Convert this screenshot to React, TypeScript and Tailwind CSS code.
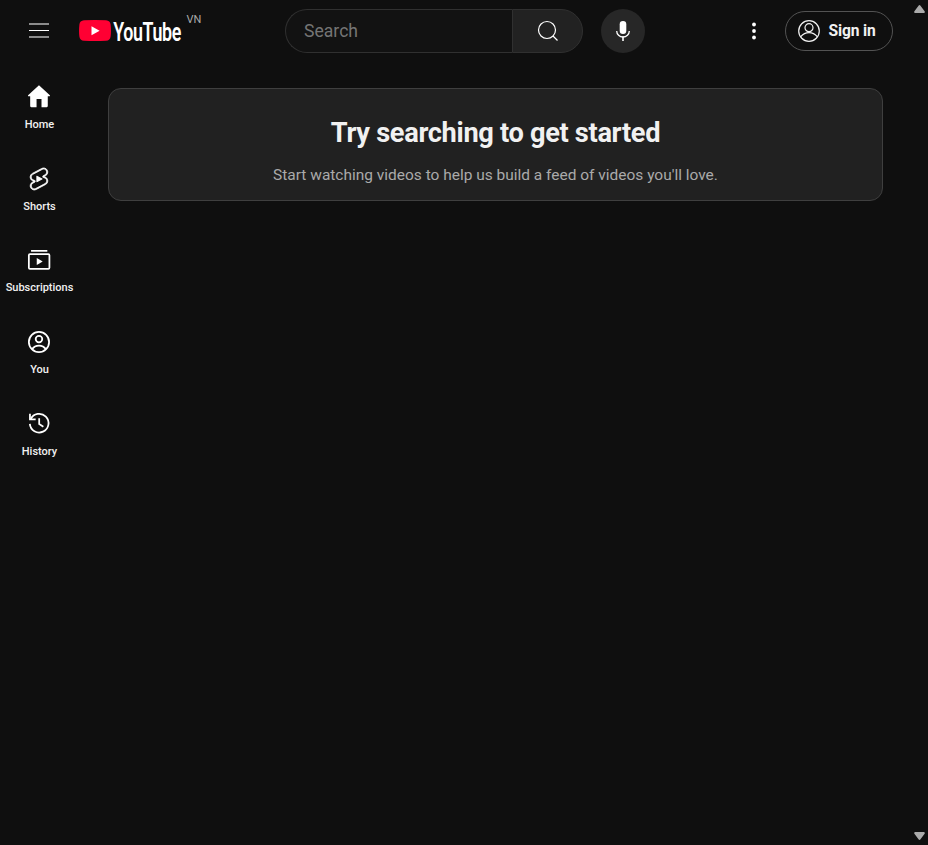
import React from "react";

type IconProps = { children: React.ReactNode };

function GuideIcon({ children }: IconProps) {
  return (
    <svg viewBox="0 0 24 24" className="size-[26.4px]" fill="none" stroke="#fff" strokeWidth="1.6">
      {children}
    </svg>
  );
}

const guideItems = [
  {
    label: "Home",
    icon: (
      <path
        d="M11.800 1.100 21.700 10.300c.3.3.1.9-.4.9H19.800v8.900c0 .6-.4 1-1 1h-4.700v-7.500H9.600v7.500H4.800c-.6 0-1-.4-1-1v-8.900H2.300c-.5 0-.7-.6-.4-.9Z"
        fill="#fff"
        stroke="none"
      />
    ),
  },
  {
    label: "Shorts",
    icon: (
      <path
        transform="translate(-.2 .7)"
        d="M10 14.65v-5.3L15 12l-5 2.65zm7.77-4.33c-.77-.32-1.2-.5-1.2-.5L18 9.06c1.84-.96 2.53-3.23 1.56-5.06s-3.24-2.53-5.07-1.56L6 6.94c-1.29.68-2.07 2.04-2 3.49.07 1.42.93 2.67 2.22 3.25.03.01 1.2.5 1.2.5L6 14.93c-1.83.97-2.53 3.24-1.56 5.07.97 1.83 3.24 2.53 5.07 1.56l8.5-4.5c1.29-.68 2.06-2.04 1.99-3.49-.07-1.42-.94-2.68-2.23-3.25zm-.23 5.86l-8.5 4.5c-1.34.71-3.01.2-3.72-1.14-.71-1.34-.2-3.01 1.14-3.72l2.04-1.08v-1.21l-.69-.28-1.11-.46c-.99-.41-1.65-1.35-1.7-2.41-.05-1.06.52-2.06 1.46-2.56l8.5-4.5c1.34-.71 3.01-.2 3.72 1.14.71 1.34.2 3.01-1.14 3.72L15.5 9.26v1.21l1.8.74c.99.41 1.65 1.35 1.7 2.41.05 1.06-.52 2.06-1.46 2.56z"
        fill="#fff"
        stroke="#fff"
        strokeWidth="0.7"
      />
    ),
  },
  {
    label: "Subscriptions",
    icon: (
      <>
        <path d="M4.600 3.500h14.800" />
        <rect x="2.600" y="6.500" width="18.700" height="13.400" rx="1" />
        <path d="M9.800 10.100v6.200l5.400-3.100Z" fill="#fff" stroke="none" />
      </>
    ),
  },
  {
    label: "You",
    icon: (
      <>
        <circle cx="11.800" cy="11.900" r="9.200" />
        <circle cx="11.800" cy="9.200" r="3" />
        <path d="M5.500 18.500C7 16.200 9.200 15.100 11.800 15.100s4.800 1.100 6.300 3.400" />
      </>
    ),
  },
  {
    label: "History",
    icon: (
      <>
        <path d="M4.300 8.300A8.500 8.500 0 1 1 3.500 12.600" />
        <path d="M3.600 3.500v5h5.200" />
        <path d="M12 7.500v5.300l3.800 2.400" />
      </>
    ),
  },
];

function Header() {
  return (
    <header className="flex h-[62px] items-center">
      <button className="ml-[26px] flex size-[26px] items-center justify-center" aria-label="Guide">
        <svg width="20" height="16" viewBox="0 0 20 16" className="block">
          <path d="M0 1h20M0 14h20" stroke="#8b8b8b" strokeWidth="2" />
          <path d="M0 7.500h20" stroke="#fff" strokeWidth="1" />
        </svg>
      </button>
      <div className="ml-[27px] flex w-[206px] items-center">
        <svg width="104" height="32" viewBox="0 0 104 32" className="block">
          <path
            d="M5 5.200Q16 4.600 27 5.200Q31.200 5.500 31.600 9.500Q32.300 16 31.600 21.500Q31.200 25.500 27 25.800Q16 26.400 5 25.800Q.8 25.500.4 21.500Q-.3 16 .4 9.500Q.8 5.500 5 5.200Z"
            fill="#ff0033"
          />
          <path d="M12.500 11.300v9L20.600 15.800Z" fill="#fff" />
          <text
            transform="translate(34.200 25.800) scale(.67 1)"
            fill="#fff"
            fontSize="26.600"
            fontWeight="600"
            letterSpacing="-.5"
            fontFamily="Roboto, sans-serif"
          >
            YouTube
          </text>
        </svg>
        <span className="mb-[22px] ml-[3.500px] text-[11px] leading-[12px] text-[#aaa]">VN</span>
      </div>
      <div className="flex h-11 w-[298px]">
        <div className="flex w-[227px] items-center rounded-l-full border border-r-0 border-[#303030] bg-[#121212] pl-[18px] text-[17.600px] text-[#757575]">
          Search
        </div>
        <button
          className="flex w-[71px] items-center justify-center rounded-r-full border border-[#303030] bg-[#222]"
          aria-label="Search"
        >
          <svg width="22" height="22" viewBox="0 0 22 22" fill="none" stroke="#fff" strokeWidth="1.200">
            <circle cx="10" cy="10" r="8.500" />
            <path d="m16 16 4.500 4.500" />
          </svg>
        </button>
      </div>
      <button className="ml-[18px] flex size-11 items-center justify-center rounded-full bg-[#272727]" aria-label="Voice">
        <svg width="16" height="22" viewBox="0 0 16 22" fill="none">
          <rect x="4.700" y="1" width="6.600" height="13" rx="3.300" fill="#fff" />
          <path d="M1.700 11a6.300 6 0 0 0 12.600 0" stroke="#fff" strokeWidth="1.300" />
          <path d="M8 16.500v4.500" stroke="#fff" strokeWidth="1.600" />
        </svg>
      </button>
      <svg width="6" height="18" viewBox="0 0 6 18" fill="#fff" className="ml-[106px]">
        <circle cx="3" cy="2.500" r="1.900" />
        <circle cx="3" cy="9" r="1.900" />
        <circle cx="3" cy="15.500" r="1.900" />
      </svg>
      <button className="ml-7 flex h-10 w-[108px] items-center rounded-full border border-[#535353] pl-3">
        <svg width="22" height="22" viewBox="0 0 22 22" fill="none" stroke="#f1f1f1" strokeWidth="1.200">
          <circle cx="11" cy="11" r="10.300" />
          <circle cx="11" cy="7.700" r="4" />
          <path d="M2.500 16.800C5 14 7.800 12.700 11 12.700s6 1.300 8.500 4.100" />
        </svg>
        <span className="ml-[8.500px] pt-px text-[15.600px] font-bold tracking-[-0.150px] whitespace-nowrap text-[#f1f1f1]">
          Sign in
        </span>
      </button>
    </header>
  );
}

export default function App() {
  return (
    <div
      className="flex h-[845px] w-[928px] overflow-hidden bg-[#0f0f0f] text-[#f1f1f1]"
      style={{ fontFamily: "Roboto, Arial, sans-serif" }}
    >
      <div className="w-[911px]">
        <Header />
        <div className="flex">
          <nav className="flex w-[79px] flex-col pt-[6px]">
            {guideItems.map((item) => (
              <div key={item.label} className="flex h-[81.700px] flex-col items-center pt-[15.500px]">
                <GuideIcon>{item.icon}</GuideIcon>
                <span className="mt-[7px] text-[11px] leading-[15px] font-medium">{item.label}</span>
              </div>
            ))}
          </nav>
          <main className="ml-[29px] mt-[26px] flex h-[113px] w-[775px] flex-col items-center rounded-[13px] border border-[#3f3f3f] bg-[#212121]">
            <h1 className="mt-[26px] text-[27.200px] leading-9 font-bold tracking-[-0.320px]">Try searching to get started</h1>
            <p className="mt-[13px] text-[15.470px] leading-[22px] text-[#aaa]">
              Start watching videos to help us build a feed of videos you'll love.
            </p>
          </main>
        </div>
      </div>
      <div className="flex w-[17px] flex-col items-center justify-between py-[5px]">
        <svg width="11" height="8" viewBox="0 0 11 8" fill="#aaa">
          <path d="M5.500 0Q6 0 6.500 .7L10.800 6.500Q11 8 10 8H1Q0 8 .2 6.500L4.500 .7Q5 0 5.500 0Z" />
        </svg>
        <svg width="11" height="8" viewBox="0 0 11 8" fill="#aaa">
          <path d="M5.500 8Q6 8 6.500 7.300L10.800 1.500Q11 0 10 0H1Q0 0 .2 1.500L4.500 7.300Q5 8 5.500 8Z" />
        </svg>
      </div>
    </div>
  );
}
